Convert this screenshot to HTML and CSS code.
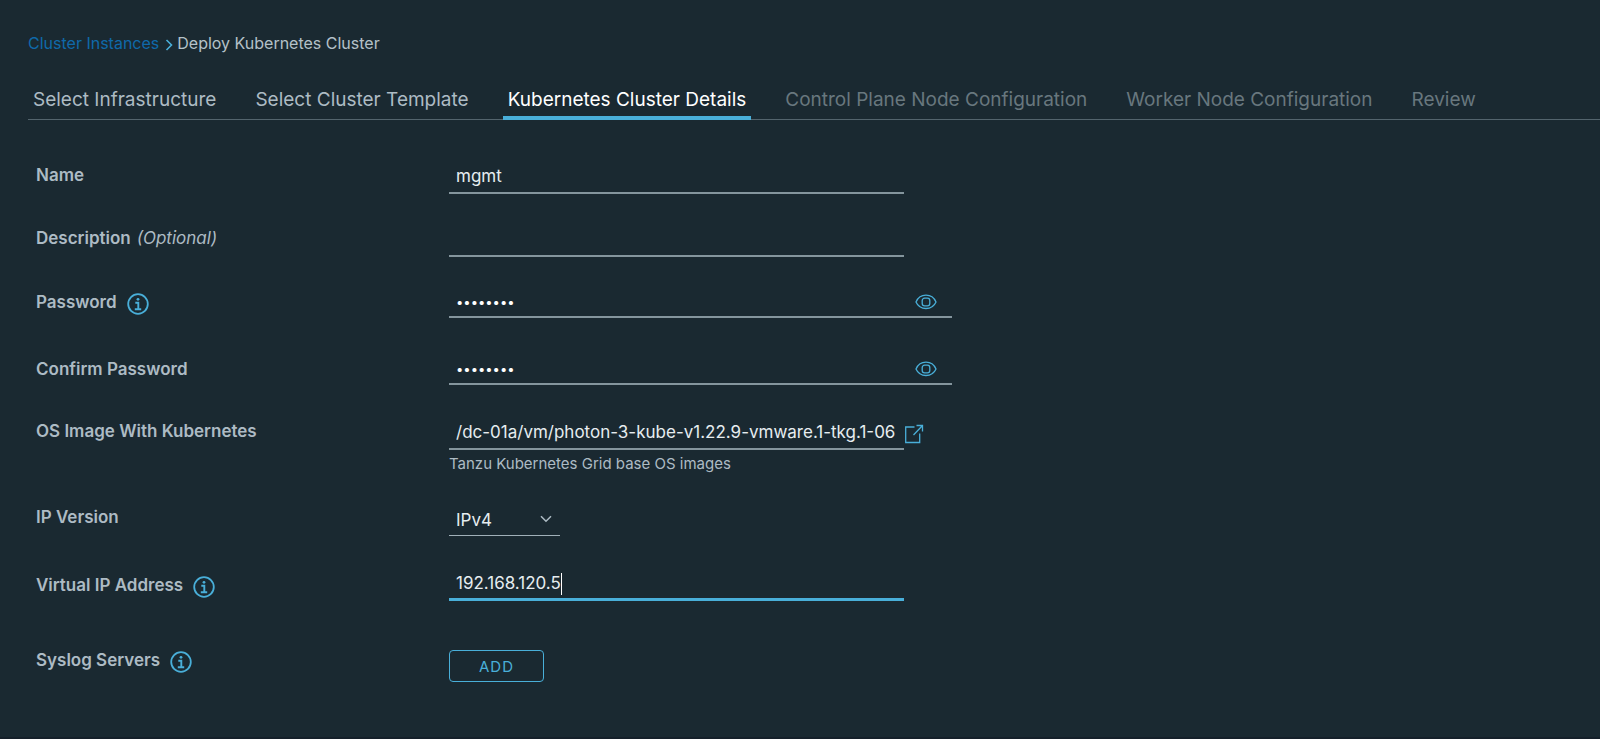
FILE: index.html
```html
<!DOCTYPE html>
<html lang="en">
<head>
<meta charset="utf-8">
<title>Deploy Kubernetes Cluster</title>
<link rel="stylesheet" href="styles.css">
</head>
<body>
<svg class="sprite" aria-hidden="true">
  <symbol id="info" viewBox="0 0 22 22">
    <circle cx="11" cy="11" r="9.8" fill="none" stroke="currentColor" stroke-width="1.8"/>
    <circle cx="11" cy="6.3" r="1.4" fill="currentColor"/>
    <path d="M8.300 9.700h3v6M7.800 16.200h6.400" fill="none" stroke="currentColor" stroke-width="1.900"/>
  </symbol>
  <symbol id="eye" viewBox="0 0 22 16">
    <path d="M1 8C3 3.500 6.500 1.200 11 1.200S19 3.500 21 8C19 12.500 15.500 14.500 11 14.500S3 12.500 1 8Z" fill="none" stroke="currentColor" stroke-width="1.300"/>
    <rect x="7.200" y="4.200" width="7.600" height="7.600" rx="2.400" fill="none" stroke="currentColor" stroke-width="1.300"/>
  </symbol>
</svg>
<main class="page">
  <nav class="crumbs" aria-label="Breadcrumb">
    <a class="crumb-link" href="#">Cluster Instances</a>
    <svg class="crumb-sep" viewBox="0 0 8 12" aria-hidden="true"><path d="M1.500 1L6.500 6L1.500 11" fill="none" stroke="currentColor" stroke-width="1.600"/></svg>
    <span>Deploy Kubernetes Cluster</span>
  </nav>
  <div class="tabs" role="tablist">
    <button class="tab" role="tab" type="button">Select Infrastructure</button>
    <button class="tab" role="tab" type="button">Select Cluster Template</button>
    <button class="tab tab-active" role="tab" type="button" aria-selected="true">Kubernetes Cluster Details</button>
    <button class="tab" role="tab" type="button" disabled>Control Plane Node Configuration</button>
    <button class="tab" role="tab" type="button" disabled>Worker Node Configuration</button>
    <button class="tab" role="tab" type="button" disabled>Review</button>
  </div>
  <form class="form">
    <div class="row">
      <label class="label" for="name">Name</label>
      <input class="input" id="name" type="text" value="mgmt">
    </div>
    <div class="row row-short">
      <label class="label" for="description">Description <em class="optional">(Optional)</em></label>
      <input class="input" id="description" type="text">
    </div>
    <div class="row row-tall">
      <div class="label label-info"><label for="password">Password</label><svg class="info"><use href="#info"/></svg></div>
      <div class="secret">
        <input class="secret-input" id="password" type="password" value="password">
        <button class="eye" type="button" aria-label="Show password"><svg class="eye-icon"><use href="#eye"/></svg></button>
      </div>
    </div>
    <div class="row">
      <label class="label label-info" for="confirm">Confirm Password</label>
      <div class="secret">
        <input class="secret-input" id="confirm" type="password" value="password">
        <button class="eye" type="button" aria-label="Show password"><svg class="eye-icon"><use href="#eye"/></svg></button>
      </div>
    </div>
    <div class="row row-help">
      <label class="label" for="image">OS Image With Kubernetes</label>
      <div>
        <div class="with-link">
          <input class="input" id="image" type="text" value="/dc-01a/vm/photon-3-kube-v1.22.9-vmware.1-tkg.1-06">
          <a class="popout" href="#" aria-label="Open image">
            <svg class="popout-icon" viewBox="0 0 20 20"><path d="M10.500 3H1.700v15.500h14V9.500M12.500 1.500h6v6M18.300 1.700L9.500 11" fill="none" stroke="currentColor" stroke-width="1.300"/></svg>
          </a>
        </div>
        <p class="help">Tanzu Kubernetes Grid base OS images</p>
      </div>
    </div>
    <div class="row">
      <label class="label" for="ipversion">IP Version</label>
      <div class="select-wrap">
        <select class="select" id="ipversion"><option>IPv4</option></select>
        <svg class="chevron" viewBox="0 0 12 8" aria-hidden="true"><path d="M1 1.200L6 6.300L11 1.200" fill="none" stroke="currentColor" stroke-width="1.500"/></svg>
      </div>
    </div>
    <div class="row row-last">
      <div class="label label-info"><label for="vip">Virtual IP Address</label><svg class="info"><use href="#info"/></svg></div>
      <div class="focus-wrap"><input class="input input-focus" id="vip" type="text" value="192.168.120.5"></div>
    </div>
    <div class="row">
      <div class="label label-info">Syslog Servers<svg class="info"><use href="#info"/></svg></div>
      <button class="add" type="button">ADD</button>
    </div>
  </form>
</main>
</body>
</html>
```
FILE: styles.css
```css
* { box-sizing: border-box; }
body {
  margin: 0;
  min-height: 100vh;
  background: #1a2931;
  border-bottom: 2px solid #15202a;
  color: #adbbc4;
  font-family: Inter, "Open Sans", sans-serif;
  font-size: 17px;
}
button, input, select { font: inherit; color: inherit; background: none; border: 0; border-radius: 0; outline: 0; margin: 0; padding: 0; }
.sprite { display: none; }
.page { padding: 31px 0 0 28px; }
.crumbs { display: flex; align-items: center; height: 24px; color: #b4c1c8; font-size: 16px; }
.crumb-link { color: #0f69aa; text-decoration: none; }
.crumb-sep { width: 8px; height: 12px; margin: 3px 4px 0 6px; color: #49afd9; }
.tabs { display: flex; gap: 29px; margin-top: 24px; height: 41px; border-bottom: 1px solid #53646d; font-size: 19px; }
.tab { height: 41px; padding: 3px 5px 0; color: #adbbc4; white-space: nowrap; border-bottom: 4px solid transparent; }
.tab-active { color: #fff; border-color: #49afd9; }
.tab:disabled { color: #68777e; }
.form { padding: 42px 0 0 8px; }
.row { display: grid; grid-template-columns: 413px 1fr; align-items: start; justify-items: start; min-height: 65px; }
.row:first-child { min-height: 63px; }
.row-short { min-height: 61px; }
.row-tall { min-height: 67px; }
.row-help { min-height: 86px; }
.row-last { min-height: 75px; }
.label { display: flex; align-items: center; height: 26px; font-weight: 600; }
.label-info { height: 32px; }
.optional { font-weight: 400; margin-left: 6px; }
.info { width: 22px; height: 22px; margin: 4px 0 0 10px; color: #49afd9; }
.input { width: 455px; height: 32px; padding: 0 7px 2px; border-bottom: 2px solid #84959d; color: #e6edf0; }
.input-focus { border-color: #49afd9; border-bottom-width: 3px; caret-color: transparent; }
.secret { display: flex; align-items: center; width: 503px; height: 32px; padding: 1px 15px 0 7px; border-bottom: 2px solid #84959d; }
.secret-input { flex: 1; color: #fff; font-size: 13px; }
.eye { height: 18px; color: #49afd9; }
.eye-icon { display: block; width: 22px; height: 16px; }
.with-link { display: flex; align-items: center; }
.popout { color: #49afd9; }
.popout-icon { display: block; width: 20px; height: 20px; }
.help { margin: 4px 0 0; font-size: 15px; line-height: 20px; }
.select-wrap { position: relative; }
.select { appearance: none; width: 111px; height: 32px; padding: 0 7px; border-bottom: 1px solid #a0b0b8; color: #e6edf0; }
.chevron { position: absolute; right: 8px; top: 11px; width: 12px; height: 8px; pointer-events: none; }
.focus-wrap { position: relative; }
.focus-wrap::after { content: ""; position: absolute; left: 112px; top: 4px; width: 1px; height: 22px; background: #fff; }
.add { width: 95px; height: 32px; margin-top: 6px; border: 1px solid #49afd9; border-radius: 4px; color: #49afd9; font-size: 15px; letter-spacing: 1px; }
```
